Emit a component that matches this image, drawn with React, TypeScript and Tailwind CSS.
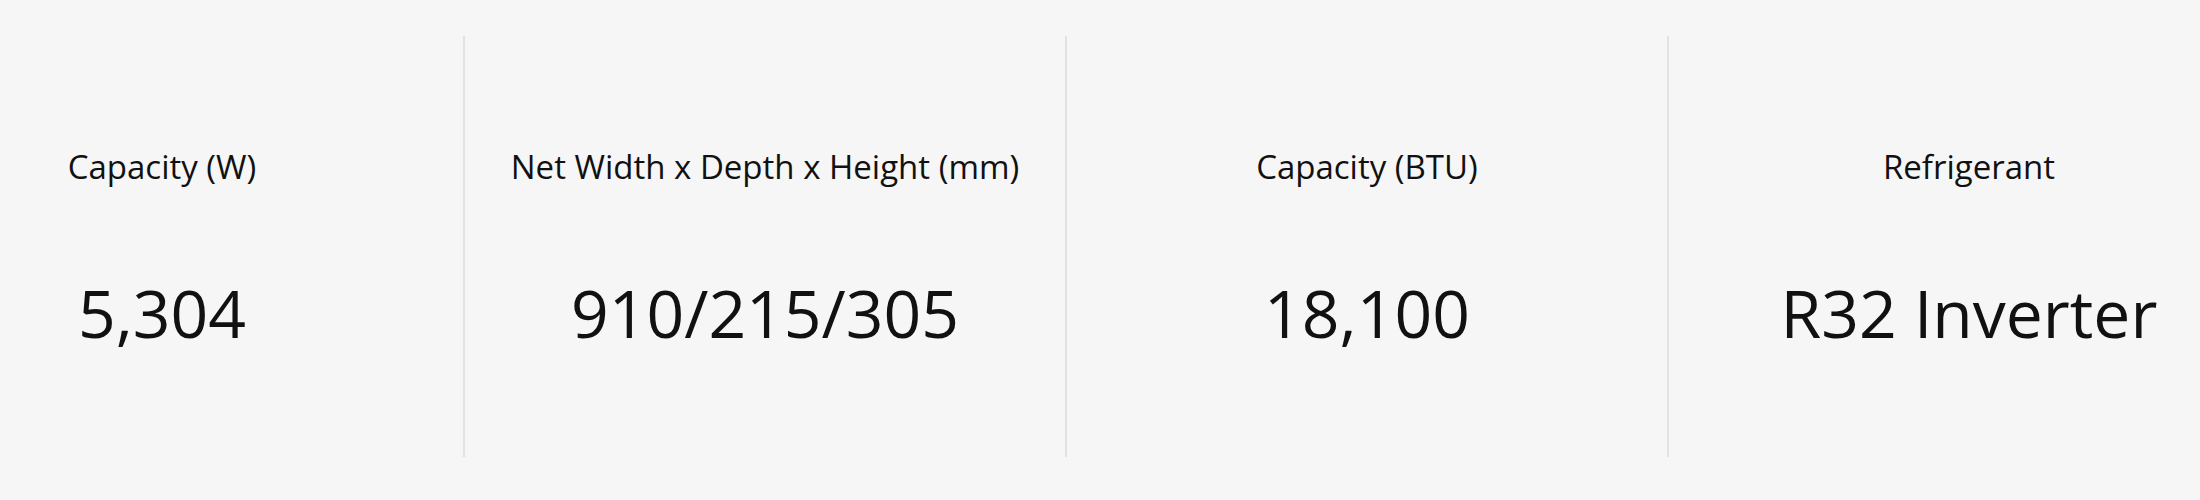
export default function App() {
  const specs = [
    { label: "Capacity (W)", value: "5,304" },
    { label: "Net Width x Depth x Height (mm)", value: "910/215/305" },
    { label: "Capacity (BTU)", value: "18,100" },
    { label: "Refrigerant", value: "R32 Inverter" },
  ];

  return (
    <div
      className="w-full h-[500px] overflow-hidden bg-[#f6f6f6] pt-[36px]"
      style={{ fontFamily: '"Open Sans", "Noto Sans", sans-serif' }}
    >
      <div className="flex ml-[-139px] h-[421px]">
        {specs.map((spec, index) => (
          <div
            key={spec.label}
            className={`flex flex-col items-center shrink-0 w-[602px] h-full pt-[114px] ${
              index > 0 ? "border-l-2 border-[#e2e2e2]" : ""
            }`}
          >
            <div className="text-[33px] leading-[33px] text-[#111111] whitespace-nowrap">
              {spec.label}
            </div>
            <div className="mt-[96px] text-[66px] leading-[66px] text-[#111111] whitespace-nowrap">
              {spec.value}
            </div>
          </div>
        ))}
      </div>
    </div>
  );
}
